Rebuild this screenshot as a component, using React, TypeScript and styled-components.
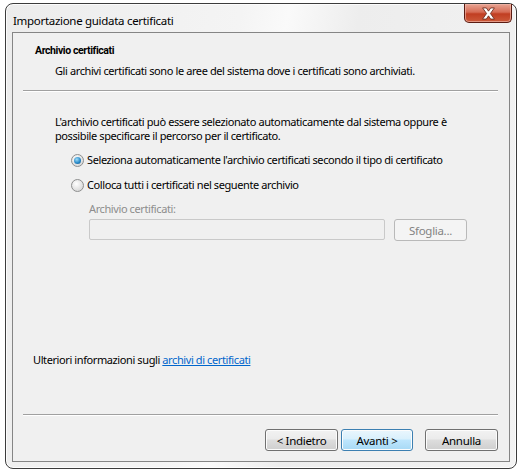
import React, { useState } from "react";
import styled, { createGlobalStyle } from "styled-components";

const GlobalStyle = createGlobalStyle`
  html, body {
    margin: 0;
    background: #ffffff;
  }
  body {
    font-family: "Noto Sans", "DejaVu Sans", sans-serif;
    font-size: 11px;
    letter-spacing: -0.4px;
    color: #000;
  }
`;

const Window = styled.div`
  box-sizing: border-box;
  width: 512px;
  height: 466px;
  margin: 3px 0 0 5px;
  border: 1px solid #3c3c3c;
  border-radius: 8px;
  background: linear-gradient(100deg, #ececec 0%, #f4f4f4 40%, #fafafa 48%, #ededed 60%, #f3f3f3 100%);
  box-shadow: inset 0 0 0 1px #ffffffcc;
  display: flex;
  flex-direction: column;
`;

const TitleBar = styled.div`
  display: flex;
  justify-content: space-between;
  align-items: flex-start;
  height: 28px;
  padding-left: 7px;
`;

const Title = styled.span`
  padding-top: 10px;
  font-size: 11.5px;
  line-height: 14px;
  letter-spacing: -0.3px;
`;

const CloseButton = styled.div`
  box-sizing: border-box;
  width: 48px;
  height: 19px;
  margin: 0 4px 0 0;
  border: 1px solid #5a1b12;
  border-top: none;
  border-radius: 0 0 5px 5px;
  background: linear-gradient(#e8a493 0%, #d66c55 45%, #c13e22 55%, #cc5a3a 100%);
  box-shadow: inset 0 0 0 1px #efb7a9aa;
  display: flex;
  align-items: center;
  justify-content: center;
`;

const Client = styled.div`
  flex: 1;
  margin: 0 6px 6px 6px;
  border: 1px solid #858585;
  background: #f0f0f0;
  display: flex;
  flex-direction: column;
`;

const Header = styled.div`
  padding: 11px 0 0 22px;
  height: 46px;
  box-sizing: border-box;
`;

const HeaderTitle = styled.div`
  font-family: Roboto, "Noto Sans", sans-serif;
  font-weight: bold;
  font-size: 10.5px;
  line-height: 14px;
  letter-spacing: -0.4px;
`;

const HeaderSub = styled.div`
  margin: 6px 0 0 20px;
  line-height: 14px;
`;

const Separator = styled.div`
  height: 0;
  margin: 11px 11px 0 10px;
  border-top: 1px solid #a0a0a0;
  border-bottom: 1px solid #ffffff;
`;

const Body = styled.div`
  flex: 1;
  padding: 23px 0 0 42px;
  display: flex;
  flex-direction: column;
`;

const Paragraph = styled.p`
  margin: 0;
  line-height: 14px;
`;

const RadioList = styled.div`
  display: flex;
  flex-direction: column;
  gap: 11px;
  margin: 10px 0 0 16px;
`;

const RadioRow = styled.label`
  display: flex;
  align-items: center;
  gap: 3px;
  line-height: 14px;
  cursor: default;
`;

const RadioCircle = styled.span<{ $checked: boolean }>`
  box-sizing: border-box;
  width: 13px;
  height: 13px;
  border-radius: 50%;
  border: 1px solid #8e8f8f;
  background: radial-gradient(circle at 40% 35%, #ffffff 0%, #dcdcdc 70%, #cfcfcf 100%);
  display: flex;
  align-items: center;
  justify-content: center;
  &::after {
    content: "";
    display: ${(p) => (p.$checked ? "block" : "none")};
    width: 7px;
    height: 7px;
    border-radius: 50%;
    background: radial-gradient(circle at 40% 35%, #9fdcf8 0%, #2a8bc9 55%, #0d4c82 100%);
  }
`;

const PathBlock = styled.div`
  margin: 10px 0 0 34px;
  display: flex;
  flex-direction: column;
  gap: 3px;
`;

const DisabledLabel = styled.div`
  color: #8d8d8d;
  line-height: 14px;
`;

const PathRow = styled.div`
  display: flex;
  gap: 9px;
`;

const PathInput = styled.div`
  box-sizing: border-box;
  width: 296px;
  height: 21px;
  border: 1px solid #c9c9c9;
  border-radius: 2px;
  background: #f0f0f0;
`;

const Button = styled.button<{ $variant?: "default" | "disabled"; $w?: number; $spaced?: boolean }>`
  box-sizing: border-box;
  height: 22px;
  width: ${(p) => p.$w ?? 73}px;
  margin-left: ${(p) => (p.$spaced ? 9 : 0)}px;
  padding: 0;
  font-family: inherit;
  font-size: 11.5px;
  letter-spacing: -0.3px;
  border-radius: 3px;
  border: 1px solid
    ${(p) =>
      p.$variant === "default"
        ? "#3c7fb1"
        : p.$variant === "disabled"
        ? "#b9b9b9"
        : "#707070"};
  color: ${(p) => (p.$variant === "disabled" ? "#838383" : "#000")};
  background: ${(p) =>
    p.$variant === "default"
      ? "linear-gradient(#eaf6fd 0%, #d9f0fc 45%, #bee6fd 50%, #a7d9f5 100%)"
      : p.$variant === "disabled"
      ? "#f4f4f4"
      : "linear-gradient(#f2f2f2 0%, #ebebeb 45%, #dddddd 50%, #cfcfcf 100%)"};
  box-shadow: inset 0 0 0 1px
    ${(p) => (p.$variant === "disabled" ? "#f4f4f4" : "#fcfcfc")};
`;

const InfoLine = styled.div`
  padding: 0 0 36px 20px;
  line-height: 14px;
`;

const Link = styled.a`
  color: #0066cc;
  text-decoration: underline;
`;

const Footer = styled.div`
  display: flex;
  justify-content: flex-end;
  padding: 13px 11px 0 0;
  gap: 3px;
  height: 45px;
  box-sizing: border-box;
`;

function CloseGlyph() {
  return (
    <svg width="15" height="13" viewBox="0 0 14 12">
      <path
        d="M1.5 0.8 L5 0.8 L7 3.8 L9 0.8 L12.5 0.8 L8.8 6 L12.5 11.2 L9 11.2 L7 8.2 L5 11.2 L1.5 11.2 L5.2 6 Z"
        fill="#ffffff"
        stroke="#6b2a1c"
        strokeWidth="0.8"
        strokeLinejoin="round"
      />
    </svg>
  );
}

export default function App() {
  const [choice, setChoice] = useState<"auto" | "manual">("auto");

  return (
    <>
      <GlobalStyle />
      <Window>
        <TitleBar>
          <Title>Importazione guidata certificati</Title>
          <CloseButton>
            <CloseGlyph />
          </CloseButton>
        </TitleBar>
        <Client>
          <Header>
            <HeaderTitle>Archivio certificati</HeaderTitle>
            <HeaderSub>
              Gli archivi certificati sono le aree del sistema dove i certificati sono archiviati.
            </HeaderSub>
          </Header>
          <Separator />
          <Body>
            <Paragraph>
              L'archivio certificati può essere selezionato automaticamente dal sistema oppure è
              <br />
              possibile specificare il percorso per il certificato.
            </Paragraph>
            <RadioList>
              <RadioRow onClick={() => setChoice("auto")}>
                <RadioCircle $checked={choice === "auto"} />
                Seleziona automaticamente l'archivio certificati secondo il tipo di certificato
              </RadioRow>
              <RadioRow onClick={() => setChoice("manual")}>
                <RadioCircle $checked={choice === "manual"} />
                Colloca tutti i certificati nel seguente archivio
              </RadioRow>
            </RadioList>
            <PathBlock>
              <DisabledLabel>Archivio certificati:</DisabledLabel>
              <PathRow>
                <PathInput />
                <Button $variant="disabled">Sfoglia...</Button>
              </PathRow>
            </PathBlock>
          </Body>
          <InfoLine>
            Ulteriori informazioni sugli <Link href="#">archivi di certificati</Link>
          </InfoLine>
          <Separator />
          <Footer>
            <Button>&lt; Indietro</Button>
            <Button $variant="default" $w={72}>
              Avanti &gt;
            </Button>
            <Button $spaced>Annulla</Button>
          </Footer>
        </Client>
      </Window>
    </>
  );
}
